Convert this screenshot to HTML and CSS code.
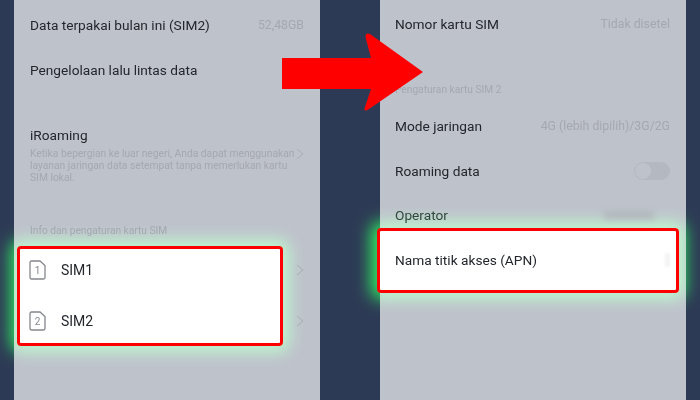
FILE: index.html
```html
<!DOCTYPE html>
<html lang="id">
<head>
    <meta charset="UTF-8">
    <title>Pengaturan APN</title>
    <link rel="stylesheet" href="styles.css">
</head>
<body>
    <div class="page">
        <section class="phone phone-left">
            <div class="highlight highlight-sim"></div>
            <div class="row row-data">
                <span class="label">Data terpakai bulan ini (SIM2)</span>
                <span class="value">52,48GB</span>
            </div>
            <div class="row row-traffic">
                <span class="label">Pengelolaan lalu lintas data</span>
            </div>
            <div class="roaming">
                <div class="label">iRoaming</div>
                <div class="roaming-body">
                    <p class="desc">Ketika bepergian ke luar negeri, Anda dapat menggunakan layanan jaringan data setempat tanpa memerlukan kartu SIM lokal.</p>
                    <svg class="chevron" width="8" height="12" viewBox="0 0 8 12"><path d="M1 1l6 5-6 5"/></svg>
                </div>
            </div>
            <div class="section-title title-sim">Info dan pengaturan kartu SIM</div>
            <div class="row row-sim row-sim1">
                <span class="sim-name">
                    <svg class="sim-icon" width="17" height="20" viewBox="0 0 17 20"><path d="M2.500 1h8.500l5 4.500v12a1.500 1.500 0 0 1-1.500 1.500h-12a1.500 1.500 0 0 1-1.500-1.500v-15a1.500 1.500 0 0 1 1.500-1.500z"/><text x="8.500" y="14">1</text></svg>
                    <span class="label">SIM1</span>
                </span>
                <svg class="chevron" width="8" height="12" viewBox="0 0 8 12"><path d="M1 1l6 5-6 5"/></svg>
            </div>
            <div class="row row-sim row-sim2">
                <span class="sim-name">
                    <svg class="sim-icon" width="17" height="20" viewBox="0 0 17 20"><path d="M2.500 1h8.500l5 4.500v12a1.500 1.500 0 0 1-1.500 1.500h-12a1.500 1.500 0 0 1-1.500-1.500v-15a1.500 1.500 0 0 1 1.500-1.500z"/><text x="8.500" y="14">2</text></svg>
                    <span class="label">SIM2</span>
                </span>
                <svg class="chevron" width="8" height="12" viewBox="0 0 8 12"><path d="M1 1l6 5-6 5"/></svg>
            </div>
        </section>

        <section class="phone phone-right">
            <div class="highlight highlight-apn"></div>
            <div class="row row-number">
                <span class="label">Nomor kartu SIM</span>
                <span class="value">Tidak disetel</span>
            </div>
            <div class="section-title title-sim2">Pengaturan kartu SIM 2</div>
            <div class="row row-mode">
                <span class="label">Mode jaringan</span>
                <span class="value">4G (lebih dipilih)/3G/2G</span>
            </div>
            <div class="row row-roaming">
                <span class="label">Roaming data</span>
                <span class="toggle"><span class="toggle-knob"></span></span>
            </div>
            <div class="row row-operator">
                <span class="label label-dim">Operator</span>
                <span class="smudge"></span>
            </div>
            <div class="row row-apn">
                <span class="label">Nama titik akses (APN)</span>
                <span class="smudge-light"></span>
            </div>
        </section>

        <svg class="arrow" width="142" height="79" viewBox="0 0 142 79"><path d="M0 25H89L84 6Q82 -1 88 1L141 39L87 76Q81 80 83 74L89 56H0z"/></svg>
    </div>
</body>
</html>
```

FILE: styles.css
```css
* { box-sizing: border-box; }

html, body {
    margin: 0;
    padding: 0;
}

.page {
    position: relative;
    display: flex;
    gap: 60px;
    width: 700px;
    height: 400px;
    padding-left: 14px;
    overflow: hidden;
    background: #2d3a55;
    font-family: Roboto, "Liberation Sans", sans-serif;
}

.phone {
    position: relative;
    width: 306px;
    height: 400px;
    background: #bec2cb;
}

.phone-left { padding: 15px 16px 0 16px; }
.phone-right { padding: 14px 16px 0 15px; }

.highlight {
    position: absolute;
    background: #fff;
    border: 3px solid #f00;
    border-radius: 4px;
}

/* screen blend: pale on the grey panel, strong green on the navy */
.highlight::before {
    content: "";
    position: absolute;
    inset: -3px;
    border-radius: 4px;
    box-shadow: 0 0 16px 6px rgb(0, 235, 20);
    mix-blend-mode: screen;
}

.highlight-sim {
    left: 3px;
    top: 246px;
    width: 266px;
    height: 100px;
}

.highlight-apn {
    left: -3px;
    top: 228px;
    width: 302px;
    height: 65px;
}

.row {
    position: relative;
    display: flex;
    align-items: center;
    justify-content: space-between;
    height: 20px;
}

.label {
    font-size: 13.700px;
    line-height: 20px;
    color: #23262c;
}

.label-dim { color: #2f4a3c; }

.value {
    font-size: 12.300px;
    color: #a4a8b1;
}

.row-traffic { margin-top: 25px; }

.roaming { margin-top: 45px; }

.roaming-body {
    display: flex;
    align-items: flex-start;
    justify-content: space-between;
    margin-top: 3px;
}

.desc {
    width: 272px;
    margin: 0;
    font-size: 10.270px;
    line-height: 12px;
    color: #a4a8b1;
}

.chevron {
    flex: none;
    fill: none;
    stroke: #a9adb6;
    stroke-width: 1;
}

.section-title {
    position: relative;
    font-size: 10.200px;
    line-height: 14px;
    color: #a4a8b1;
}

.title-sim { margin-top: 40px; }

.row-sim1 { margin-top: 22px; }
.row-sim2 { margin-top: 31px; }

.sim-name {
    display: flex;
    align-items: center;
    gap: 15px;
    margin-left: -1px;
}

.sim-name .label { font-size: 14px; }

.sim-icon path {
    fill: none;
    stroke: #84878c;
    stroke-width: 1.300;
}

.sim-icon text {
    font-size: 10px;
    text-anchor: middle;
    fill: #84878c;
}

.title-sim2 { margin-top: 49px; }
.row-mode { margin-top: 19px; }
.row-roaming { margin-top: 25px; }
.row-operator { margin-top: 24px; }
.row-apn { margin-top: 25px; }

.toggle {
    display: block;
    width: 36px;
    height: 18px;
    padding: 1px;
    border-radius: 9px;
    background: #b4b8c1;
}

.toggle-knob {
    display: block;
    width: 16px;
    height: 16px;
    border-radius: 50%;
    background: #bec2cb;
}

.smudge {
    width: 50px;
    height: 8px;
    margin-right: 16px;
    background: #b2b7bd;
    filter: blur(3px);
}

.smudge-light {
    width: 5px;
    height: 14px;
    background: #f4f4f5;
    filter: blur(1px);
}

.arrow {
    position: absolute;
    left: 282px;
    top: 33px;
    fill: #f00;
}
```
